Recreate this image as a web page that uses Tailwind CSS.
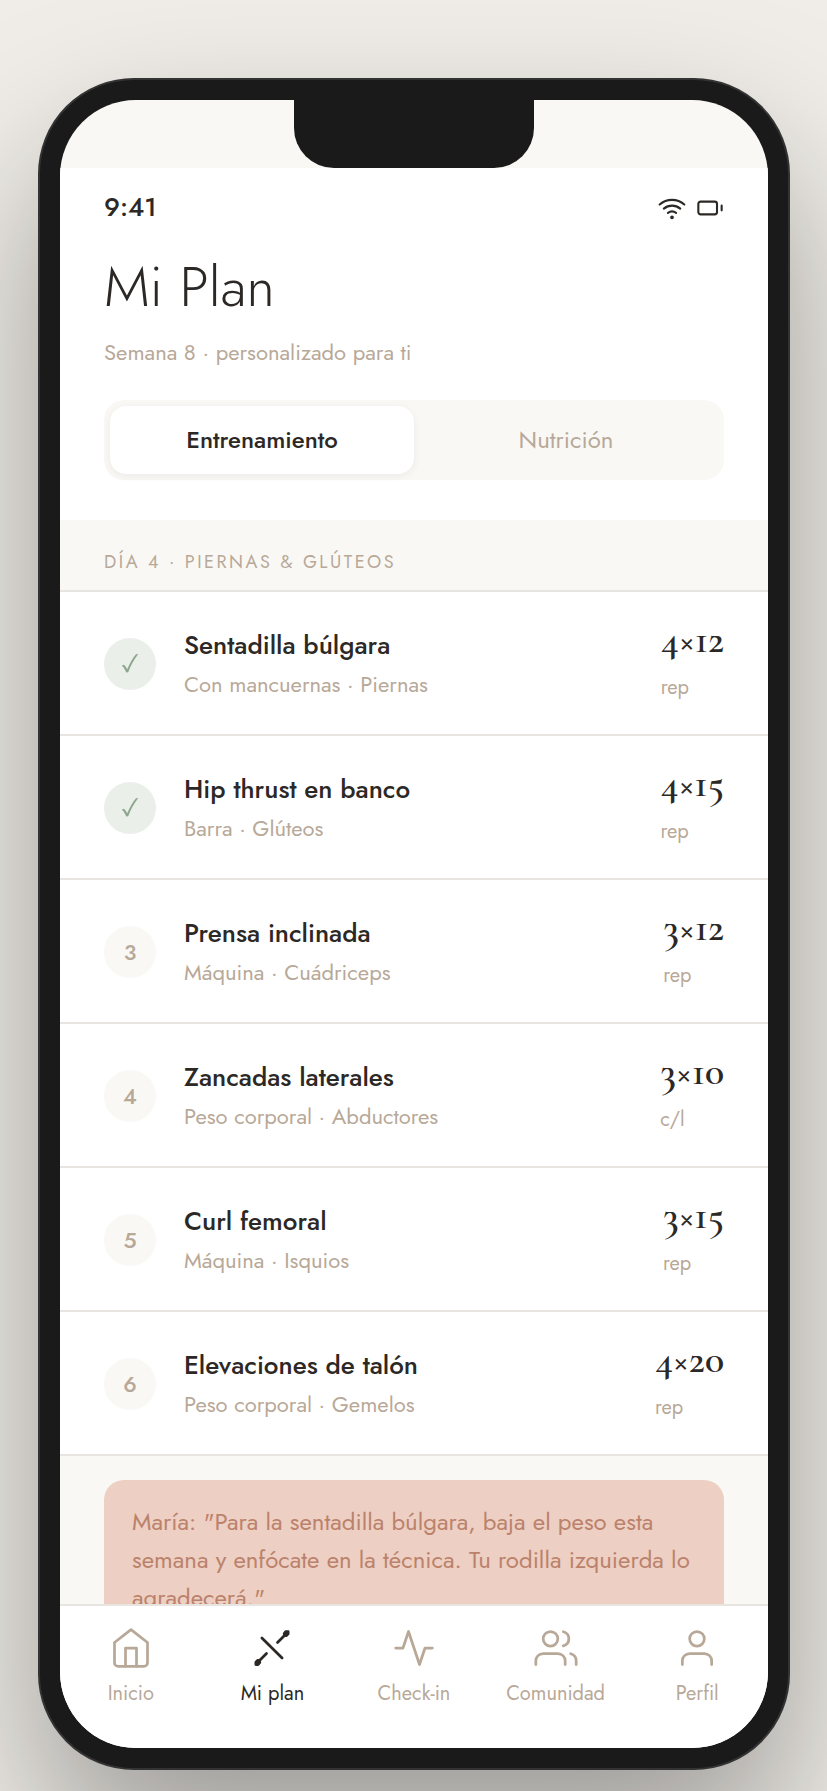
<!DOCTYPE html>
<html lang="es">
<head>
    <meta charset="UTF-8">
    <meta name="viewport" content="width=device-width, initial-scale=1.0">
    <title>Mi Plan</title>
    <script src="https://cdn.jsdelivr.net/npm/@tailwindcss/browser@4"></script>
</head>
<body class="min-h-screen overflow-hidden bg-[#f0ede8] pt-[78px] pr-[37px] pl-[38px] font-['Jost','Lato',sans-serif] text-[#2c2825]">
    <!-- Phone frame -->
    <div class="mx-auto flex aspect-[188/423] w-full max-w-[752px] rounded-[96px] border-2 border-[#333333] bg-[#1a1a1a] p-5 shadow-[0_80px_160px_rgba(0,0,0,0.35)]">
        <div class="relative flex min-h-0 w-full flex-col overflow-hidden rounded-[76px] bg-[#f9f8f5] pt-[68px]">
            <!-- Notch -->
            <div class="absolute top-0 left-1/2 h-[68px] w-60 -translate-x-1/2 rounded-b-[40px] bg-[#1a1a1a]"></div>

            <header class="bg-white px-11 pt-6 pb-10">
                <div class="flex h-8 items-center justify-between">
                    <span class="pb-[2px] text-[26px] leading-8 font-medium">9:41</span>
                    <div class="flex items-center gap-[10px]">
                        <svg class="size-7" viewBox="0 0 24 24" fill="none" stroke="currentColor" stroke-width="1.8" stroke-linecap="round" stroke-linejoin="round" aria-hidden="true">
                            <path d="M1.42 9a16 16 0 0 1 21.16 0M5 12.55a11 11 0 0 1 14.08 0M8.53 16.11a6 6 0 0 1 6.95 0"/>
                            <circle cx="12" cy="20" r="1" fill="currentColor" stroke-width="1.2"/>
                        </svg>
                        <svg class="size-7" viewBox="0 0 24 24" fill="none" stroke="currentColor" stroke-width="1.8" stroke-linecap="round" stroke-linejoin="round" aria-hidden="true">
                            <rect x="2" y="6.5" width="16" height="11" rx="2"/>
                            <path d="M22 10v4"/>
                        </svg>
                    </div>
                </div>
                <h1 class="mt-7 text-[56px] leading-[70px] font-light">Mi Plan</h1>
                <p class="mt-[14px] text-[22px] leading-8 text-[#b8a898]">Semana 8 · personalizado para ti</p>
                <div class="mt-8 flex rounded-[20px] bg-[#f9f8f5] p-[6px]">
                    <button class="h-[68px] flex-1 rounded-2xl bg-white text-2xl font-medium shadow-[0_2px_8px_rgba(0,0,0,0.06)]">Entrenamiento</button>
                    <button class="h-[68px] flex-1 rounded-2xl text-2xl text-[#b8a898]">Nutrición</button>
                </div>
            </header>

            <main class="min-h-0 flex-1 overflow-hidden">
                <h2 class="border-b-2 border-[#e8e4df] px-11 pt-7 pb-[14px] text-[18px] leading-7 tracking-[0.14em] text-[#b8a898] uppercase">Día 4 · Piernas &amp; Glúteos</h2>

                <ul>
                    <li class="flex items-center gap-7 border-b-2 border-[#e8e4df] bg-white px-11 pt-[34px] pb-8">
                        <span class="flex size-[52px] items-center justify-center rounded-full bg-[#eaefe9] text-[#8fa68e]">
                            <svg class="size-6" viewBox="0 0 24 24" fill="currentColor" role="img" aria-label="Hecho"><path d="M3.8 13.4l2.2-.7c1.3 1.2 2.3 2.8 3.2 4.6C11.500 12 14.500 6.500 18 2.300L20.300 2C16 7.400 12.800 13.500 10.200 20.200l-2 .4C7.200 17.600 5.800 15.200 3.800 13.400z"/></svg>
                        </span>
                        <div class="flex-1">
                            <h3 class="text-[26px] leading-[34px] font-medium">Sentadilla búlgara</h3>
                            <p class="mt-[6px] text-[22px] leading-8 text-[#b8a898]">Con mancuernas · Piernas</p>
                        </div>
                        <div>
                            <p class="font-['Cormorant_Garamond','Liberation_Serif',serif] text-[40px] leading-[26px] font-semibold">4×12</p>
                            <p class="mt-[22px] text-[20px] leading-7 text-[#b8a898]">rep</p>
                        </div>
                    </li>
                    <li class="flex items-center gap-7 border-b-2 border-[#e8e4df] bg-white px-11 pt-[34px] pb-8">
                        <span class="flex size-[52px] items-center justify-center rounded-full bg-[#eaefe9] text-[#8fa68e]">
                            <svg class="size-6" viewBox="0 0 24 24" fill="currentColor" role="img" aria-label="Hecho"><path d="M3.8 13.4l2.2-.7c1.3 1.2 2.3 2.8 3.2 4.6C11.500 12 14.500 6.500 18 2.300L20.300 2C16 7.400 12.800 13.500 10.200 20.200l-2 .4C7.200 17.600 5.800 15.200 3.800 13.400z"/></svg>
                        </span>
                        <div class="flex-1">
                            <h3 class="text-[26px] leading-[34px] font-medium">Hip thrust en banco</h3>
                            <p class="mt-[6px] text-[22px] leading-8 text-[#b8a898]">Barra · Glúteos</p>
                        </div>
                        <div>
                            <p class="font-['Cormorant_Garamond','Liberation_Serif',serif] text-[40px] leading-[26px] font-semibold">4×15</p>
                            <p class="mt-[22px] text-[20px] leading-7 text-[#b8a898]">rep</p>
                        </div>
                    </li>
                    <li class="flex items-center gap-7 border-b-2 border-[#e8e4df] bg-white px-11 pt-[34px] pb-8">
                        <span class="flex size-[52px] items-center justify-center rounded-full bg-[#f9f8f5] text-[22px] font-medium text-[#b8a898]">3</span>
                        <div class="flex-1">
                            <h3 class="text-[26px] leading-[34px] font-medium">Prensa inclinada</h3>
                            <p class="mt-[6px] text-[22px] leading-8 text-[#b8a898]">Máquina · Cuádriceps</p>
                        </div>
                        <div>
                            <p class="font-['Cormorant_Garamond','Liberation_Serif',serif] text-[40px] leading-[26px] font-semibold">3×12</p>
                            <p class="mt-[22px] text-[20px] leading-7 text-[#b8a898]">rep</p>
                        </div>
                    </li>
                    <li class="flex items-center gap-7 border-b-2 border-[#e8e4df] bg-white px-11 pt-[34px] pb-8">
                        <span class="flex size-[52px] items-center justify-center rounded-full bg-[#f9f8f5] text-[22px] font-medium text-[#b8a898]">4</span>
                        <div class="flex-1">
                            <h3 class="text-[26px] leading-[34px] font-medium">Zancadas laterales</h3>
                            <p class="mt-[6px] text-[22px] leading-8 text-[#b8a898]">Peso corporal · Abductores</p>
                        </div>
                        <div>
                            <p class="font-['Cormorant_Garamond','Liberation_Serif',serif] text-[40px] leading-[26px] font-semibold">3×10</p>
                            <p class="mt-[22px] text-[20px] leading-7 text-[#b8a898]">c/l</p>
                        </div>
                    </li>
                    <li class="flex items-center gap-7 border-b-2 border-[#e8e4df] bg-white px-11 pt-[34px] pb-8">
                        <span class="flex size-[52px] items-center justify-center rounded-full bg-[#f9f8f5] text-[22px] font-medium text-[#b8a898]">5</span>
                        <div class="flex-1">
                            <h3 class="text-[26px] leading-[34px] font-medium">Curl femoral</h3>
                            <p class="mt-[6px] text-[22px] leading-8 text-[#b8a898]">Máquina · Isquios</p>
                        </div>
                        <div>
                            <p class="font-['Cormorant_Garamond','Liberation_Serif',serif] text-[40px] leading-[26px] font-semibold">3×15</p>
                            <p class="mt-[22px] text-[20px] leading-7 text-[#b8a898]">rep</p>
                        </div>
                    </li>
                    <li class="flex items-center gap-7 border-b-2 border-[#e8e4df] bg-white px-11 pt-[34px] pb-8">
                        <span class="flex size-[52px] items-center justify-center rounded-full bg-[#f9f8f5] text-[22px] font-medium text-[#b8a898]">6</span>
                        <div class="flex-1">
                            <h3 class="text-[26px] leading-[34px] font-medium">Elevaciones de talón</h3>
                            <p class="mt-[6px] text-[22px] leading-8 text-[#b8a898]">Peso corporal · Gemelos</p>
                        </div>
                        <div>
                            <p class="font-['Cormorant_Garamond','Liberation_Serif',serif] text-[40px] leading-[26px] font-semibold">4×20</p>
                            <p class="mt-[22px] text-[20px] leading-7 text-[#b8a898]">rep</p>
                        </div>
                    </li>
                </ul>

                <!-- Coach note -->
                <p class="mx-11 mt-6 rounded-[20px] bg-[#edcfc4] px-7 py-[23px] text-2xl leading-[38px] text-[#bb826b]">María: "Para la sentadilla búlgara, baja el peso esta semana y enfócate en la técnica. Tu rodilla izquierda lo agradecerá."</p>
            </main>

            <!-- Tab bar -->
            <nav class="flex border-t-2 border-[#e8e4df] bg-white pt-5 pb-10 text-[20px] leading-7 text-[#b8a898]">
                <a href="#" class="flex flex-1 flex-col items-center gap-[10px]">
                    <svg class="size-11" viewBox="0 0 24 24" fill="none" stroke="currentColor" stroke-width="1.5" stroke-linecap="round" stroke-linejoin="round" aria-hidden="true"><path d="m3 9 9-7 9 7v11a2 2 0 0 1-2 2H5a2 2 0 0 1-2-2z"/><path d="M9 22V12h6v10"/></svg>
                    Inicio
                </a>
                <a href="#" class="flex flex-1 flex-col items-center gap-[10px] text-[#2c2825]" aria-current="page">
                    <svg class="size-11" viewBox="0 0 24 24" fill="none" stroke="currentColor" stroke-width="1.5" stroke-linecap="round" stroke-linejoin="round" aria-hidden="true"><path d="m6.5 6.5 11 11M15 9l4.5-4.5M9 15l-4.5 4.500"/><path fill="currentColor" d="M20.8 3h-1.200L18.700 4v1.200h1.200l.9-.9zM3.200 21h1.200l.9-1v-1.200H4.100l-.9.9z"/></svg>
                    Mi plan
                </a>
                <a href="#" class="flex flex-1 flex-col items-center gap-[10px]">
                    <svg class="size-11" viewBox="0 0 24 24" fill="none" stroke="currentColor" stroke-width="1.5" stroke-linecap="round" stroke-linejoin="round" aria-hidden="true"><path d="M22 12h-4l-3 9L9 3l-3 9H2"/></svg>
                    Check-in
                </a>
                <a href="#" class="flex flex-1 flex-col items-center gap-[10px]">
                    <svg class="size-11" viewBox="0 0 24 24" fill="none" stroke="currentColor" stroke-width="1.5" stroke-linecap="round" stroke-linejoin="round" aria-hidden="true"><path d="M17 21v-2a4 4 0 0 0-4-4H5a4 4 0 0 0-4 4v2"/><circle cx="9" cy="7" r="4"/><path d="M23 21v-2a4 4 0 0 0-3-3.87M16 3.13a4 4 0 0 1 0 7.75"/></svg>
                    Comunidad
                </a>
                <a href="#" class="flex flex-1 flex-col items-center gap-[10px]">
                    <svg class="size-11" viewBox="0 0 24 24" fill="none" stroke="currentColor" stroke-width="1.5" stroke-linecap="round" stroke-linejoin="round" aria-hidden="true"><path d="M20 21v-2a4 4 0 0 0-4-4H8a4 4 0 0 0-4 4v2"/><circle cx="12" cy="7" r="4"/></svg>
                    Perfil
                </a>
            </nav>
        </div>
    </div>
</body>
</html>
